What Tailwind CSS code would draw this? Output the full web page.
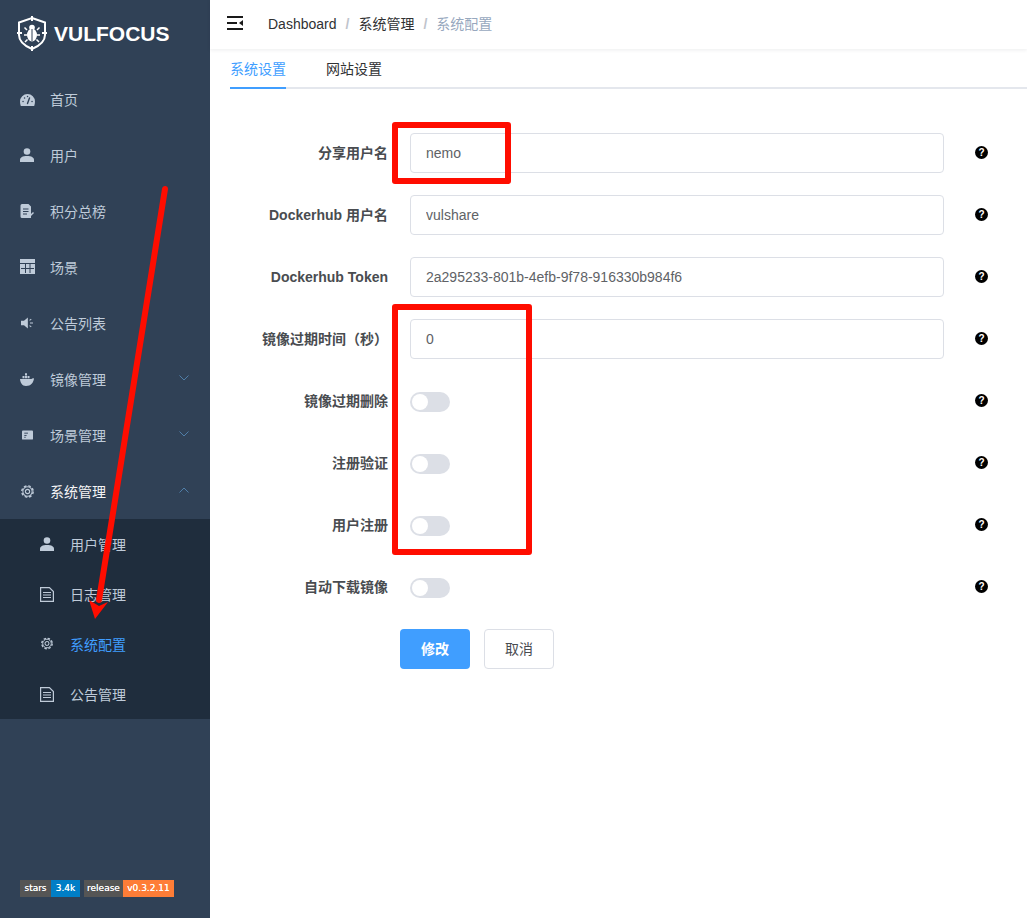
<!DOCTYPE html>
<html lang="zh-CN">
<head>
  <meta charset="UTF-8">
  <title>系统配置</title>
  <script src="https://cdn.jsdelivr.net/npm/@tailwindcss/browser@4"></script>
</head>
<body class="font-['Liberation_Sans','Noto_Sans_CJK_SC',sans-serif] bg-white">
  <div class="relative flex w-[1027px] h-[918px] overflow-hidden">

    <!-- sidebar -->
    <aside class="w-[210px] shrink-0 bg-[#304156] flex flex-col text-[14px] text-[#bfcbd9]">
      <div class="h-[72px] flex items-start pl-[17px] pt-[16px] gap-[7px]">
        <svg class="w-[30px] h-[35px]" viewBox="0 0 30 35">
          <path d="M15 2 L28 6.500 V19 C28 26 21 30.500 15 33 C9 30.500 2 26 2 19 V6.500 Z" fill="none" stroke="#fff" stroke-width="2"/>
          <path d="M15 0v5M15 30v5M0 17h5M25 17h5" stroke="#fff" stroke-width="2"/>
          <ellipse cx="15" cy="19" rx="5" ry="6.500" fill="#fff"/>
          <circle cx="15" cy="11.500" r="2.800" fill="#fff"/>
          <path d="M15 13v12" stroke="#304156" stroke-width="1"/>
          <path d="M10 14 7.500 11.500M20 14l2.500-2.500M10 19H7M20 19h3M10.500 23.500 8 26M19.500 23.500 22 26" stroke="#fff" stroke-width="1.500"/>
        </svg>
        <span class="text-white font-bold text-[21px] leading-[35px]">VULFOCUS</span>
      </div>

      <nav class="block">
        <a class="h-[56px] flex items-center pl-[20px]">
          <svg class="w-[15px] h-[12px] mr-[15px] mb-[1px]" viewBox="0 0 15 12"><path d="M7.500 0A7.500 7.500 0 0 0 0 7.500c0 1.700.3 3 .8 4.500h13.400c.5-1.500.8-2.800.8-4.500A7.500 7.500 0 0 0 7.500 0z" fill="#bfcbd9"/><path d="M7.500 9.500 9.500 4M3 7.500h.1M4.500 4h.1M7.500 2.500h.1M12 7.500h.1" stroke="#304156" stroke-width="1.400" stroke-linecap="round"/></svg>
          <span>首页</span>
        </a>
        <a class="h-[56px] flex items-center pl-[20px]">
          <svg class="w-[14px] h-[14px] mr-[16px] mb-[2px]" viewBox="0 0 14 14"><circle cx="7" cy="3.500" r="3.300" fill="#bfcbd9"/><path d="M0 14v-2c0-2.500 2.500-4 7-4s7 1.500 7 4v2z" fill="#bfcbd9"/></svg>
          <span>用户</span>
        </a>
        <a class="h-[56px] flex items-center pl-[20px]">
          <svg class="w-[14px] h-[14px] mr-[16px] mb-[2px]" viewBox="0 0 14 14"><path d="M2 0h6.500L11 2.500V14H2a1.500 1.500 0 0 1-1.500-1.500v-11A1.500 1.500 0 0 1 2 0z" fill="#bfcbd9"/><path d="M3 5h5.500M3 7.500h5.500M3 10h4" stroke="#304156" stroke-width="1.200"/><path d="m8.500 13.500 5-5" stroke="#bfcbd9" stroke-width="1.500"/></svg>
          <span>积分总榜</span>
        </a>
        <a class="h-[56px] flex items-center pl-[20px]">
          <svg class="w-[15px] h-[15px] mr-[15px] mb-[3px]" viewBox="0 0 15 15"><rect width="15" height="15" fill="#bfcbd9"/><path d="M0 4.500h15M1 9.500h13M5.500 4.500V14M10 4.500V14" stroke="#304156"/></svg>
          <span>场景</span>
        </a>
        <a class="h-[56px] flex items-center pl-[21px]">
          <svg class="w-[12px] h-[12px] mr-[17px] mb-[3px]" viewBox="0 0 14 14"><path d="M0 4.500h3.500L8 .5v13L3.500 9.500H0z" fill="#bfcbd9"/><path d="M10 4 12 2.500M10.500 7H14M10 10l2 1.500" stroke="#bfcbd9" stroke-width="1.200"/></svg>
          <span>公告列表</span>
        </a>
        <a class="h-[56px] flex items-center pl-[20px] pr-[21px]">
          <svg class="w-[14px] h-[13px] mr-[16px] mb-[2px]" viewBox="0 0 14 13"><path d="M0 6h11.500c.5-.6 1.500-.8 2.500-.5C13.500 9.500 11 13 6 13 2 13 .3 9.500 0 6z" fill="#bfcbd9"/><path d="M2.500 3h2v2.300h-2zM5 3h2v2.300H5zM5 .3h2v2.200H5zM7.500 3h2v2.300h-2z" fill="#bfcbd9"/></svg>
          <span class="flex-1">镜像管理</span>
          <svg class="w-[10px] h-[6px] mb-[4px]" viewBox="0 0 10 6"><path d="m.5.500 4.500 4.500L9.500.5" fill="none" stroke="#4f7ea8"/></svg>
        </a>
        <a class="h-[56px] flex items-center pl-[22px] pr-[21px]">
          <svg class="w-[11px] h-[10px] mr-[17px] mb-[2px]" viewBox="0 0 12 10"><rect width="12" height="10" rx="1" fill="#bfcbd9"/><path d="M2.500 3h4M2.500 5.500h2.500M2.500 7.500h1.500" stroke="#304156"/></svg>
          <span class="flex-1">场景管理</span>
          <svg class="w-[10px] h-[6px] mb-[4px]" viewBox="0 0 10 6"><path d="m.5.500 4.500 4.500L9.500.5" fill="none" stroke="#4f7ea8"/></svg>
        </a>
        <a class="h-[56px] flex items-center pl-[21px] pr-[21px] text-[#f4f4f5]">
          <svg class="w-[13px] h-[13px] mr-[16px] mb-[2px]" viewBox="0 0 14 14"><circle cx="7" cy="7" r="5" fill="none" stroke="#bfcbd9" stroke-width="1.100"/><circle cx="7" cy="7" r="6.100" fill="none" stroke="#bfcbd9" stroke-width="1.600" stroke-dasharray="2.800 2"/><circle cx="7" cy="7" r="2.300" fill="none" stroke="#bfcbd9" stroke-width="1.200"/></svg>
          <span class="flex-1">系统管理</span>
          <svg class="w-[10px] h-[6px] mb-[4px]" viewBox="0 0 10 6"><path d="m.5 5.500L5 1l4.500 4.500" fill="none" stroke="#4f7ea8"/></svg>
        </a>

        <div class="bg-[#1f2d3d] h-[200px] -mt-[1px] pt-[1px]">
          <a class="h-[50px] flex items-center pl-[40px]">
            <svg class="w-[14px] h-[14px] mr-[16px] mb-[2px]" viewBox="0 0 14 14"><circle cx="7" cy="3.500" r="3.300" fill="#bfcbd9"/><path d="M0 14v-2c0-2.500 2.500-4 7-4s7 1.500 7 4v2z" fill="#bfcbd9"/></svg>
            <span>用户管理</span>
          </a>
          <a class="h-[50px] flex items-center pl-[40px]">
            <svg class="w-[14px] h-[15px] mr-[16px] mb-[1px]" viewBox="0 0 14 15"><path d="M.6.600h8.800l4 4v9.800H.6z" fill="none" stroke="#bfcbd9" stroke-width="1.200"/><path d="M3 5.500h8M3 8h8M3 10.500h8" stroke="#bfcbd9" stroke-width="1.200"/></svg>
            <span>日志管理</span>
          </a>
          <a class="h-[50px] flex items-center pl-[41px] text-[#409eff]">
            <svg class="w-[12px] h-[13px] mr-[17px] mb-[3px]" viewBox="0 0 14 14"><circle cx="7" cy="7" r="5" fill="none" stroke="#bfcbd9" stroke-width="1.100"/><circle cx="7" cy="7" r="6.100" fill="none" stroke="#bfcbd9" stroke-width="1.600" stroke-dasharray="2.800 2"/><circle cx="7" cy="7" r="2.300" fill="none" stroke="#bfcbd9" stroke-width="1.200"/></svg>
            <span>系统配置</span>
          </a>
          <a class="h-[50px] flex items-center pl-[40px]">
            <svg class="w-[14px] h-[15px] mr-[16px] mb-[1px]" viewBox="0 0 14 15"><path d="M.6.600h8.800l4 4v9.800H.6z" fill="none" stroke="#bfcbd9" stroke-width="1.200"/><path d="M3 5.500h8M3 8h8M3 10.500h8" stroke="#bfcbd9" stroke-width="1.200"/></svg>
            <span>公告管理</span>
          </a>
        </div>
      </nav>

      <div class="mt-auto mb-[21px] ml-[20px] flex gap-[4px] text-[9px] leading-[17px] text-white font-['DejaVu_Sans',sans-serif] [text-shadow:0_0_0.6px_#fff]">
        <div class="flex h-[17px]">
          <span class="w-[31px] text-center bg-[#555555]">stars</span>
          <span class="w-[29px] text-center bg-[#007ec6]">3.4k</span>
        </div>
        <div class="flex h-[17px]">
          <span class="w-[39px] text-center bg-[#555555]">release</span>
          <span class="w-[51px] text-center bg-[#fe7d37]">v0.3.2.11</span>
        </div>
      </div>
    </aside>

    <!-- main -->
    <main class="flex-1 min-w-0 flex flex-col">
      <header class="h-[49px] flex items-start shadow-[0_1px_4px_rgba(0,21,41,0.08)] text-[14px] leading-[48px]">
        <svg class="w-[16px] h-[14px] ml-[17px] mt-[16px]" viewBox="0 0 16 14"><path d="M0 1h16M0 7h10M0 13h16" stroke="#1a1a1a" stroke-width="2"/><path d="M16 4v6l-4-3z" fill="#1a1a1a"/></svg>
        <span class="ml-[25px] text-[#303133]">Dashboard</span>
        <span class="mx-[9px] text-[#c0c4cc] font-bold">/</span>
        <span class="text-[#303133]">系统管理</span>
        <span class="mx-[9px] text-[#c0c4cc] font-bold">/</span>
        <span class="text-[#97a8be]">系统配置</span>
      </header>

      <div class="ml-[20px] mt-[2px] h-[38px] flex border-b-2 border-[#e4e7ed] text-[14px] leading-[36px]">
        <span class="w-[56px] h-[38px] text-[#409eff] border-b-2 border-[#409eff]">系统设置</span>
        <span class="ml-[40px] text-[#303133]">网站设置</span>
      </div>

      <form class="mt-[44px] flex flex-col gap-[22px] text-[14px] text-[#606266]">
        <div class="flex items-center h-[40px]">
          <label class="w-[178px] text-right font-bold text-[#494c50]">分享用户名</label>
          <input class="ml-[22px] w-[534px] h-[40px] px-[15px] border border-[#dcdfe6] rounded-[4px] text-[#606266] outline-none" value="nemo">
          <svg class="w-[13px] h-[13px] ml-[31px] mb-[1px]" viewBox="0 0 13 13"><circle cx="6.500" cy="6.500" r="6.500" fill="#000"/><text x="6.500" y="10" text-anchor="middle" font-size="10" font-weight="700" fill="#fff">?</text></svg>
        </div>
        <div class="flex items-center h-[40px]">
          <label class="w-[178px] text-right font-bold text-[#494c50]">Dockerhub 用户名</label>
          <input class="ml-[22px] w-[534px] h-[40px] px-[15px] border border-[#dcdfe6] rounded-[4px] text-[#606266] outline-none" value="vulshare">
          <svg class="w-[13px] h-[13px] ml-[31px] mb-[1px]" viewBox="0 0 13 13"><circle cx="6.500" cy="6.500" r="6.500" fill="#000"/><text x="6.500" y="10" text-anchor="middle" font-size="10" font-weight="700" fill="#fff">?</text></svg>
        </div>
        <div class="flex items-center h-[40px]">
          <label class="w-[178px] text-right font-bold text-[#494c50]">Dockerhub Token</label>
          <input class="ml-[22px] w-[534px] h-[40px] px-[15px] border border-[#dcdfe6] rounded-[4px] text-[#606266] outline-none" value="2a295233-801b-4efb-9f78-916330b984f6">
          <svg class="w-[13px] h-[13px] ml-[31px] mb-[1px]" viewBox="0 0 13 13"><circle cx="6.500" cy="6.500" r="6.500" fill="#000"/><text x="6.500" y="10" text-anchor="middle" font-size="10" font-weight="700" fill="#fff">?</text></svg>
        </div>
        <div class="flex items-center h-[40px]">
          <label class="w-[178px] text-right font-bold text-[#494c50]">镜像过期时间（秒）</label>
          <input class="ml-[22px] w-[534px] h-[40px] px-[15px] border border-[#dcdfe6] rounded-[4px] text-[#606266] outline-none" value="0">
          <svg class="w-[13px] h-[13px] ml-[31px] mb-[1px]" viewBox="0 0 13 13"><circle cx="6.500" cy="6.500" r="6.500" fill="#000"/><text x="6.500" y="10" text-anchor="middle" font-size="10" font-weight="700" fill="#fff">?</text></svg>
        </div>
        <div class="flex items-center h-[40px]">
          <label class="w-[178px] text-right font-bold text-[#494c50]">镜像过期删除</label>
          <span class="ml-[22px] mt-[2px] w-[40px] h-[20px] rounded-full bg-[#dcdfe6] p-[2px]"><span class="block w-[16px] h-[16px] rounded-full bg-white"></span></span>
          <svg class="w-[13px] h-[13px] ml-[525px] mb-[1px]" viewBox="0 0 13 13"><circle cx="6.500" cy="6.500" r="6.500" fill="#000"/><text x="6.500" y="10" text-anchor="middle" font-size="10" font-weight="700" fill="#fff">?</text></svg>
        </div>
        <div class="flex items-center h-[40px]">
          <label class="w-[178px] text-right font-bold text-[#494c50]">注册验证</label>
          <span class="ml-[22px] mt-[2px] w-[40px] h-[20px] rounded-full bg-[#dcdfe6] p-[2px]"><span class="block w-[16px] h-[16px] rounded-full bg-white"></span></span>
          <svg class="w-[13px] h-[13px] ml-[525px] mb-[1px]" viewBox="0 0 13 13"><circle cx="6.500" cy="6.500" r="6.500" fill="#000"/><text x="6.500" y="10" text-anchor="middle" font-size="10" font-weight="700" fill="#fff">?</text></svg>
        </div>
        <div class="flex items-center h-[40px]">
          <label class="w-[178px] text-right font-bold text-[#494c50]">用户注册</label>
          <span class="ml-[22px] mt-[2px] w-[40px] h-[20px] rounded-full bg-[#dcdfe6] p-[2px]"><span class="block w-[16px] h-[16px] rounded-full bg-white"></span></span>
          <svg class="w-[13px] h-[13px] ml-[525px] mb-[1px]" viewBox="0 0 13 13"><circle cx="6.500" cy="6.500" r="6.500" fill="#000"/><text x="6.500" y="10" text-anchor="middle" font-size="10" font-weight="700" fill="#fff">?</text></svg>
        </div>
        <div class="flex items-center h-[40px]">
          <label class="w-[178px] text-right font-bold text-[#494c50]">自动下载镜像</label>
          <span class="ml-[22px] mt-[2px] w-[40px] h-[20px] rounded-full bg-[#dcdfe6] p-[2px]"><span class="block w-[16px] h-[16px] rounded-full bg-white"></span></span>
          <svg class="w-[13px] h-[13px] ml-[525px] mb-[1px]" viewBox="0 0 13 13"><circle cx="6.500" cy="6.500" r="6.500" fill="#000"/><text x="6.500" y="10" text-anchor="middle" font-size="10" font-weight="700" fill="#fff">?</text></svg>
        </div>
        <div class="flex pl-[190px] gap-[14px]">
          <button type="button" class="w-[70px] h-[40px] bg-[#409eff] text-white font-bold rounded-[4px]">修改</button>
          <button type="button" class="w-[70px] h-[40px] bg-white border border-[#dcdfe6] text-[#494c50] rounded-[4px]">取消</button>
        </div>
      </form>
    </main>

    <!-- red annotations drawn over the screenshot -->
    <div class="absolute left-[392px] top-[122px] w-[119px] h-[62px] border-[6px] border-[#ff0d00] rounded-[3px]"></div>
    <div class="absolute left-[392px] top-[304px] w-[140px] h-[251px] border-[6px] border-[#ff0d00] rounded-[3px]"></div>
    <svg class="absolute left-0 top-0 pointer-events-none" width="1027" height="918" viewBox="0 0 1027 918">
      <path d="M165 189 99 600" stroke="#ff0d00" stroke-width="6" stroke-linecap="round" fill="none"/>
      <path d="M89 600 95 619 108 602 99 606z" fill="#ff0d00"/>
    </svg>
  </div>
</body>
</html>
